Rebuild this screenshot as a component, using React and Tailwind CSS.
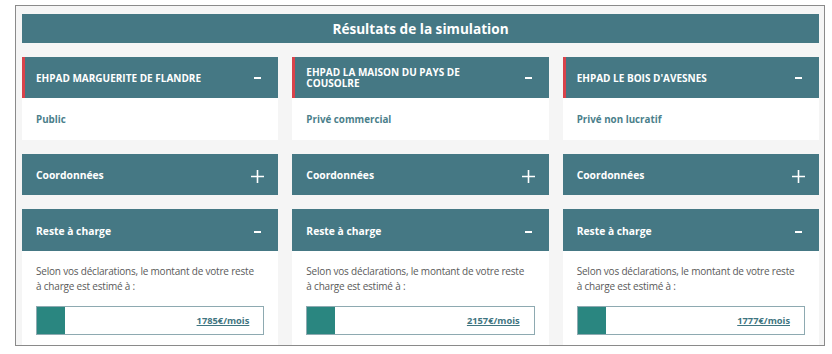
const etablissements = [
  { nom: "EHPAD MARGUERITE DE FLANDRE", statut: "Public", reste: "1785€/mois" },
  { nom: "EHPAD LA MAISON DU PAYS DE COUSOLRE", statut: "Privé commercial", reste: "2157€/mois" },
  { nom: "EHPAD LE BOIS D'AVESNES", statut: "Privé non lucratif", reste: "1777€/mois" },
];

function Minus() {
  return <span className="block w-[7px] h-[2px] bg-white" />;
}

function Plus() {
  return (
    <svg width="13" height="13" viewBox="0 0 13 13">
      <path d="M6.5 0v13M0 6.5h13" stroke="#fff" strokeWidth="1.6" />
    </svg>
  );
}

function Colonne({ item }) {
  return (
    <div className="flex flex-col gap-[14px]">
      <div>
        <div className="flex items-center h-[41px] bg-[#457884] border-l-[3px] border-[#d8434b] pl-[11px] pr-[17px] pt-[1px]">
          <div className="w-[175px] text-[10px] leading-[11px] font-bold text-white">{item.nom}</div>
          <div className="ml-auto">
            <Minus />
          </div>
        </div>
        <div className="h-[42px] bg-white flex items-center pl-[14px] pt-[2px] text-[9.8px] font-bold text-[#4b7f8b]">
          {item.statut}
        </div>
      </div>

      <div className="flex items-center h-[41px] bg-[#457884] pl-[14px] pr-[14px] pt-[3px]">
        <span className="text-[10.3px] font-bold text-white">Coordonnées</span>
        <div className="ml-auto">
          <Plus />
        </div>
      </div>

      <div>
        <div className="flex items-center h-[42px] bg-[#457884] pl-[14px] pr-[17px] pt-[3px]">
          <span className="text-[10.3px] font-bold text-white">Reste à charge</span>
          <div className="ml-auto">
            <Minus />
          </div>
        </div>
        <div className="bg-white px-[14px] pt-[13px] pb-[20px]">
          <p className="w-[221px] text-[10px] leading-[15px] tracking-[-0.2px] text-[#5a5a5a]">
            Selon vos déclarations, le montant de votre reste à charge est estimé à :
          </p>
          <div className="mt-[12px] flex h-[29px] border border-[#8eaab1]">
            <div className="w-[28px] bg-[#2a8680]" />
            <div className="flex-1 flex items-center justify-end pr-[14px]">
              <span className="text-[9.3px] font-bold text-[#3f7581] underline">{item.reste}</span>
            </div>
          </div>
        </div>
      </div>
    </div>
  );
}

export default function App() {
  return (
    <div className="w-[832px] h-[354px] bg-white pt-[5px] pl-[15px] font-['Open_Sans',sans-serif]">
      <div className="w-[810px] h-[341px] border border-[#8a8a8a] bg-[#f5f5f5] overflow-hidden pt-[8px] pl-[6px] pr-[5px]">
        <div className="h-[29px] bg-[#457884] flex items-center justify-center pt-[1px] text-[13.6px] font-bold text-white">
          Résultats de la simulation
        </div>
        <div className="mt-[14px] grid grid-cols-3 gap-x-[14px]">
          {etablissements.map((item) => (
            <Colonne key={item.nom} item={item} />
          ))}
        </div>
      </div>
    </div>
  );
}
